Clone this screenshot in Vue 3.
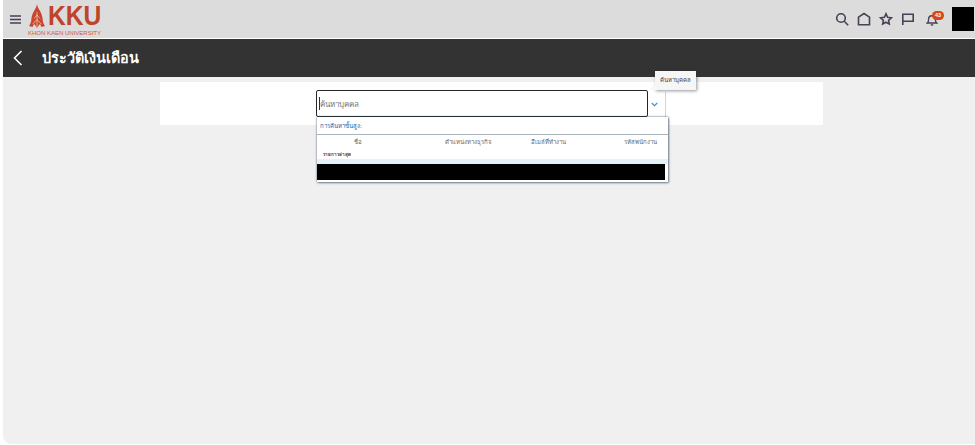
<script setup>
const columns = [
  { label: 'ชื่อ', cls: 'col-name' },
  { label: 'ตำแหน่งทางธุรกิจ', cls: 'col-job' },
  { label: 'อีเมล์ที่ทำงาน', cls: 'col-mail' },
  { label: 'รหัสพนักงาน', cls: 'col-id' }
]
</script>

<template>
  <div class="page">
    <header class="topbar">
      <div class="brand">
        <svg class="burger" viewBox="0 0 11 9" width="11" height="9" aria-hidden="true">
          <path d="M0 1h11M0 4.500h11M0 8h11" stroke="#4a3f50" stroke-width="1.300" fill="none" />
        </svg>
        <div class="logo">
          <div class="logo-top">
            <svg class="emblem" viewBox="0 0 16 24" width="16" height="24" aria-hidden="true">
              <path d="M8 0c.5 3 1.500 4.500 3 7 2 3.500 2.500 6 2.700 9 .1 2 .9 4 2.300 6l-3.500 1-1.500-3-1 1-2 3-2-3-1-1-1.500 3L0 22c1.400-2 2.200-4 2.300-6 .2-3 .7-5.500 2.700-9C6.500 4.500 7.500 3 8 0z" fill="#c9452c" />
              <path d="M8 8v15M5.200 14.500 8 11l2.800 3.500M3.800 20 8 15.500l4.200 4.500" stroke="#ecc9ba" stroke-width=".8" fill="none" />
            </svg>
            <span class="kku">KKU</span>
          </div>
          <span class="uni">KHON KAEN UNIVERSITY</span>
        </div>
      </div>
      <nav class="actions">
        <svg viewBox="0 0 14 14" width="14" height="14" aria-hidden="true"><circle cx="6" cy="6" r="4.300" /><path d="m9.200 9.200 4 4" /></svg>
        <svg viewBox="0 0 14 14" width="14" height="14" aria-hidden="true"><path d="M1.500 12.800V5.200L7 1.500l5.500 3.700v7.600z" /></svg>
        <svg viewBox="0 0 14 14" width="14" height="14" aria-hidden="true"><path d="m7 1.800 1.600 3.500 3.800.5-2.800 2.500.7 3.700L7 10.200l-3.300 1.800.7-3.700L1.600 5.800l3.800-.5z" /></svg>
        <svg viewBox="0 0 14 14" width="14" height="14" aria-hidden="true"><path d="M1.800 13V2.200h10.400v7H1.800" /></svg>
        <span class="bell">
          <svg viewBox="0 0 14 14" width="12" height="12" aria-hidden="true"><path d="M1.500 10.500c1.300-1 1.500-2.200 1.500-4.200C3 3.800 4.800 2 7 2s4 1.800 4 4.300c0 2 .2 3.200 1.500 4.200zM5.700 12.300c.6.700 2 .7 2.600 0" /></svg>
          <span class="badge">43</span>
        </span>
        <span class="avatar"></span>
      </nav>
    </header>

    <div class="titlebar">
      <svg class="back" viewBox="0 0 10 16" width="10" height="16" aria-hidden="true"><path d="M8.500 1 1.500 8l7 7" /></svg>
      <h1>ประวัติเงินเดือน</h1>
    </div>

    <main class="content">
      <section class="card">
        <div class="search">
          <div class="field">
            <span class="caret"></span>
            <span class="placeholder">ค้นหาบุคคล</span>
          </div>
          <button class="toggle" type="button" aria-label="เปิดรายการ">
            <svg viewBox="0 0 8 5" width="7" height="5" aria-hidden="true"><path d="m.8.800 3.200 3 3.200-3" /></svg>
          </button>

          <div class="tooltip">ค้นหาบุคคล</div>

          <div class="dropdown">
            <a class="advanced">การค้นหาขั้นสูง:</a>
            <div class="head">
              <span v-for="c in columns" :key="c.label" :class="c.cls">{{ c.label }}</span>
            </div>
            <div class="recent">รายการล่าสุด</div>
            <div class="tint"></div>
            <div class="redacted"></div>
          </div>
        </div>
      </section>
    </main>
  </div>
</template>

<style>
html, body { margin: 0; background: #fff; }
</style>

<style scoped>
.page {
  width: 975px;
  height: 445px;
  overflow: hidden;
  display: flex;
  flex-direction: column;
  background: #fff;
  font-family: "Noto Sans", "Liberation Sans", sans-serif;
}
.topbar {
  height: 38px;
  flex: none;
  box-sizing: border-box;
  display: flex;
  align-items: center;
  justify-content: space-between;
  margin-left: 3px;
  padding: 0 1px 0 7px;
  background: #dcdcdc;
}
.brand { display: flex; align-items: center; }
.burger { flex: none; }
.logo {
  display: flex;
  flex-direction: column;
  width: 73px;
  margin: 2px 0 0 7px;
}
.logo-top { display: flex; align-items: flex-start; height: 26px; }
.emblem { margin-left: 1px; flex: none; }
.kku {
  display: block;
  margin: 0 0 0 3px;
  height: 24px;
  font: 700 28px/24px "Liberation Sans", sans-serif;
  color: #c0432b;
  transform: scaleX(.88);
  transform-origin: left top;
  white-space: nowrap;
}
.uni {
  font: 400 6px/7px "Liberation Sans", sans-serif;
  color: #c9583f;
  white-space: nowrap;
}
.actions { display: flex; align-items: center; gap: 8px; height: 100%; }
.actions svg { fill: none; stroke: #4a3f55; stroke-width: 1.600; display: block; }
.bell { position: relative; width: 14px; height: 12px; margin: 1px 0 0 1px; padding-left: 2px; box-sizing: border-box; }
.badge {
  position: absolute;
  left: 8px;
  top: -3px;
  width: 12px;
  height: 9px;
  border-radius: 5px;
  background: #d5480f;
  color: #fff;
  font: 700 5.500px/9px "Liberation Sans", sans-serif;
  text-align: center;
}
.avatar {
  width: 22px;
  height: 24px;
  margin-left: 6px;
  background: #000;
}
.titlebar {
  flex: none;
  height: 38px;
  margin: 1px 0 0 3px;
  display: flex;
  align-items: center;
  background: #333;
  color: #fff;
}
.back { margin-left: 10px; fill: none; stroke: #fff; stroke-width: 1.600; }
.titlebar h1 {
  margin: 0 0 0 19px;
  font: 700 14.400px/20px "Noto Sans", "Liberation Sans", sans-serif;
}
.content {
  flex: 1;
  margin: 0 0 1px 3px;
  padding-top: 5px;
  background: #f0f0f0;
  border-bottom-left-radius: 8px;
}
.card {
  box-sizing: border-box;
  width: 663px;
  height: 43px;
  margin-left: 157px;
  padding: 8px 0 0 156px;
  background: #fff;
}
.search { position: relative; display: flex; align-items: flex-start; width: 350px; }
.field {
  box-sizing: border-box;
  width: 332px;
  height: 27px;
  flex: none;
  display: flex;
  align-items: center;
  padding-left: 2px;
  border: 1px solid #22262a;
  border-radius: 2px;
  background: #fff;
}
.caret { width: 1px; height: 13px; background: #333; flex: none; }
.placeholder { font-size: 8px; line-height: 12px; color: #777; }
.toggle {
  box-sizing: border-box;
  width: 18px;
  height: 25px;
  margin-top: 2px;
  padding: 0 5px 0 0;
  display: flex;
  align-items: center;
  justify-content: center;
  background: #fff;
  border: solid #cfd6db;
  border-width: 0 1px 0 0;
}
.toggle svg { fill: none; stroke: #3b8fd8; stroke-width: 1.300; }
.tooltip {
  position: absolute;
  left: 339px;
  top: -19px;
  width: 41px;
  height: 19px;
  box-shadow: 1px 1px 3px rgba(40, 50, 60, .5);
  background: #f6f6f6;
  color: #3f3f3f;
  font-size: 6px;
  line-height: 19px;
  text-align: center;
}
.tooltip::before {
  content: "";
  position: absolute;
  left: -5px;
  bottom: 0;
  border-style: solid;
  border-width: 0 0 7px 5px;
  border-color: transparent transparent #f6f6f6 transparent;
}
.dropdown {
  position: absolute;
  left: 1px;
  top: 27px;
  box-sizing: border-box;
  width: 351px;
  height: 65px;
  background: #fff;
  box-shadow: 0 0 2px rgba(50, 70, 90, .8), 1px 1px 2px rgba(50, 70, 90, .5);
}
.advanced {
  display: block;
  height: 18px;
  padding: 4px 0 0 3px;
  box-sizing: border-box;
  color: #1565a8;
  font-size: 6px;
  line-height: 10px;
  border-bottom: 1px solid #aab6bd;
}
.head { position: relative; height: 15px; color: #666; font-size: 6px; line-height: 15px; }
.head span { position: absolute; top: 0; white-space: nowrap; }
.col-name { left: 37px; }
.col-job { left: 128px; }
.col-mail { left: 214px; }
.col-id { left: 307px; }
.recent { height: 9px; padding-left: 6px; color: #333; font-size: 4.500px; line-height: 9px; font-weight: 700; }
.tint { height: 5px; background: #e3f3f9; }
.redacted { width: 348px; height: 16px; background: #000; }
</style>
